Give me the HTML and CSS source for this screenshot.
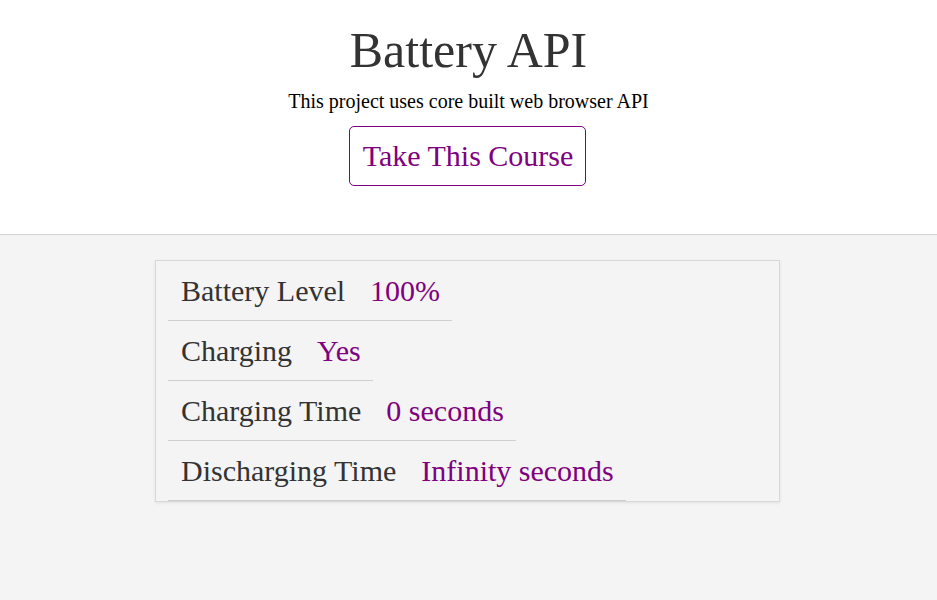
FILE: index.html
```html
<!DOCTYPE html>
<html>
<head>
<meta charset="utf-8">
<link rel="stylesheet" href="styles.css">
</head>
<body>
<header class="hero">
  <h1 class="title">Battery API</h1>
  <p class="subtitle">This project uses core built web browser API</p>
  <a class="course-btn" href="#">Take This Course</a>
</header>
<main class="content">
  <ul class="stats">
    <li class="stat"><span class="label">Battery Level</span><span class="value">100%</span></li>
    <li class="stat"><span class="label">Charging</span><span class="value">Yes</span></li>
    <li class="stat"><span class="label">Charging Time</span><span class="value">0 seconds</span></li>
    <li class="stat"><span class="label">Discharging Time</span><span class="value">Infinity seconds</span></li>
  </ul>
</main>
</body>
</html>
```
FILE: styles.css
```css
html, body {
  margin: 0;
  padding: 0;
}
body {
  font-family: "Liberation Serif", "Times New Roman", serif;
  background: #f4f4f4;
  min-height: 600px;
}
.hero {
  background: #fff;
  border-bottom: 1px solid #d4d4d4;
  text-align: center;
  padding: 21px 0 48px;
}
.title {
  margin: 0;
  font-size: 50px;
  font-weight: normal;
  color: #333;
  line-height: 58px;
}
.subtitle {
  margin: 10px 0 13px;
  font-size: 20px;
  line-height: 24px;
  color: #000;
}
.course-btn {
  display: inline-block;
  border: 1px solid #800080;
  border-radius: 5px;
  color: #800080;
  text-decoration: none;
  font-size: 30px;
  padding: 0 12px 0 13px;
  line-height: 58px;
  position: relative;
  left: -1px;
}
.content {
  padding-top: 25px;
}
.stats {
  list-style: none;
  margin: 0 auto;
  padding: 0 0 0 12px;
  width: 611px;
  border: 1px solid #d8d8d8;
  box-shadow: 0 1px 3px rgba(0,0,0,0.08);
  background: #f4f4f4;
  position: relative;
  left: -1px;
}
.stat {
  width: fit-content;
  padding: 0 12px 0 13px;
  border-bottom: 1px solid #cfcfcf;
  font-size: 30px;
  line-height: 59px;
  color: #333;
}
.value {
  color: #800080;
  margin-left: 25px;
}
```
